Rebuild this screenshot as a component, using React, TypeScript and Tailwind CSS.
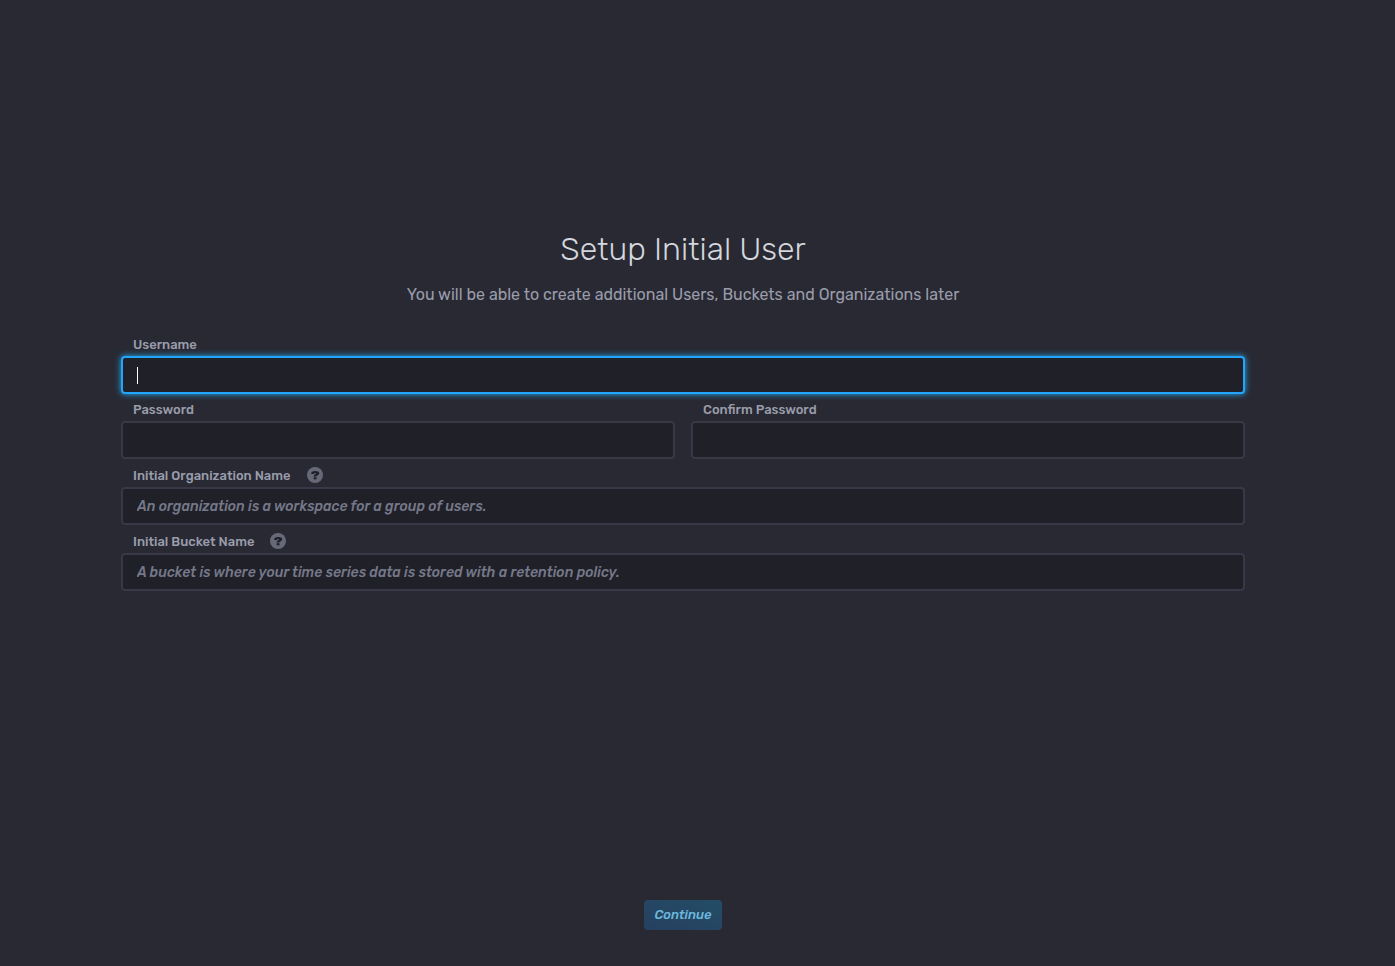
import { useState, type ReactNode } from 'react';

function Help({ label }: { label: string }) {
  return (
    <button type="button" aria-label={label} className="flex size-4 items-center justify-center rounded-full bg-[#676978] text-[#202028]">
      <svg viewBox="0 0 16 16" className="size-4" fill="currentColor">
        <path d="M4 7C4 4.8 5.7 3.9 8.2 3.9c2.4 0 4 .8 4 2.4 0 2.1-2.6 1.9-2.7 3.2H6.7c0-2.2 2.3-2 2.3-2.9 0-.4-.4-.6-.9-.6-.7 0-1 .4-1.1 1z" />
        <path d="M6.7 10.2h2.8v2.1H6.7z" />
      </svg>
    </button>
  );
}

type FieldProps = {
  id: string;
  label: string;
  type?: string;
  placeholder?: string;
  autoFocus?: boolean;
  help?: ReactNode;
};

function Field({ id, label, type = 'text', placeholder, autoFocus = false, help }: FieldProps) {
  const [value, setValue] = useState('');
  const [focused, setFocused] = useState(autoFocus);
  return (
    <div className="min-w-0 flex-1">
      <div className="flex items-center gap-4 px-3 pt-2 pb-1">
        <label htmlFor={id} className="text-[13px] leading-[15px] font-medium text-[#999dab]">{label}</label>
        {help}
      </div>
      <div className="relative">
        <input
          id={id}
          type={type}
          value={value}
          onChange={(e) => setValue(e.target.value)}
          onFocus={() => setFocused(true)}
          onBlur={() => setFocused(false)}
          placeholder={placeholder}
          autoFocus={autoFocus}
          className="block h-[38px] w-full rounded border-2 border-[#383846] bg-[#202028] px-3.5 text-sm font-medium text-white caret-transparent outline-none placeholder:text-[#757888] placeholder:[font-style:oblique_14deg] not-placeholder-shown:caret-white focus:border-[#22a5fa] focus:shadow-[0_0_6px_#22adf6]"
        />
        {focused && value === '' && (
          <span aria-hidden="true" className="pointer-events-none absolute inset-y-0 left-4 flex items-center">
            <span className="h-[17px] w-px bg-white" />
          </span>
        )}
      </div>
    </div>
  );
}

export default function App() {
  return (
    <main className="flex min-h-screen flex-col bg-[#292933] pt-[229px] pr-[150px] pb-9 pl-[121px] font-[Rubik,Roboto,sans-serif]">
      <form className="flex flex-1 flex-col" onSubmit={(e) => e.preventDefault()}>
        <h1 className="text-center text-[32px] leading-10 font-light text-[#d4d7dd]">Setup Initial User</h1>
        <p className="mt-3.5 text-center text-base text-[#999dab]">You will be able to create additional Users, Buckets and Organizations later</p>
        <div className="mt-[22px] flex flex-col">
          <Field id="username" label="Username" autoFocus />
          <div className="flex gap-4">
            <Field id="password" label="Password" type="password" />
            <Field id="confirm" label="Confirm Password" type="password" />
          </div>
          <Field id="org" label="Initial Organization Name" placeholder="An organization is a workspace for a group of users." help={<Help label="About organizations" />} />
          <Field id="bucket" label="Initial Bucket Name" placeholder="A bucket is where your time series data is stored with a retention policy." help={<Help label="About buckets" />} />
        </div>
        <button type="submit" disabled className="mx-auto mt-auto h-[30px] rounded bg-linear-to-tr from-[#264060] to-[#234d66] px-2.5 text-[13px] font-medium text-[#6bb8dc] [font-style:oblique_14deg]">Continue</button>
      </form>
    </main>
  );
}
